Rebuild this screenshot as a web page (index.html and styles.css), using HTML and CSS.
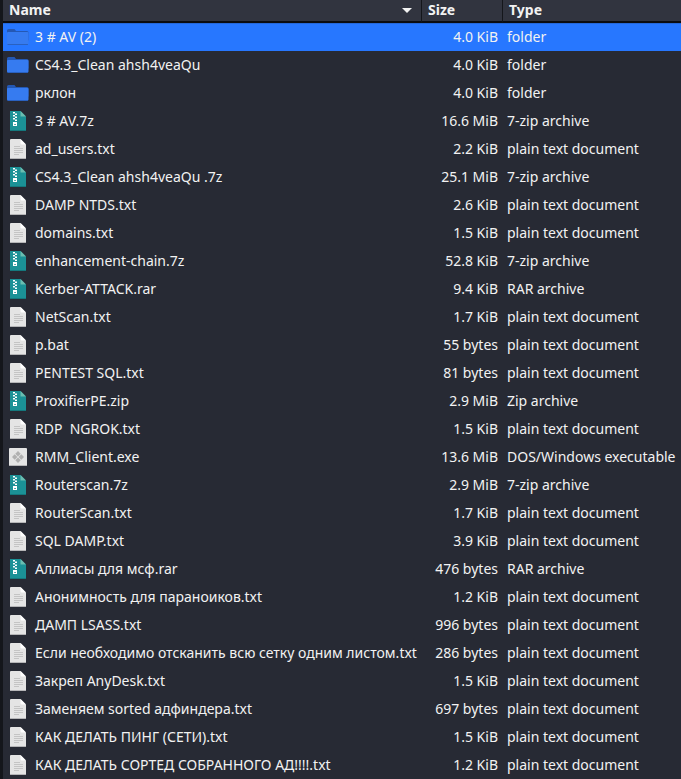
FILE: index.html
```html
<!DOCTYPE html>
<html lang="en">
<head>
    <meta charset="UTF-8">
    <meta name="viewport" content="width=device-width, initial-scale=1.0">
    <title>File Manager</title>
    <link rel="stylesheet" href="styles.css">
</head>
<body>
    <svg class="sprite" aria-hidden="true">
        <symbol id="folder" viewBox="0 0 24 24">
            <path fill="#2458b4" d="M1 5.500q0-1.500 1.500-1.500h6l1.500 2h11q1.500 0 1.500 1.500v8H1z"/>
            <rect x="1" y="7" width="21.500" height="12.500" rx="1" fill="#367bf0"/>
            <path fill="#2a61c0" d="M1.500 19h20.500v.5q0 .5-1 .5H2.500q-1 0-1-.5z"/>
        </symbol>
        <symbol id="archive" viewBox="0 0 24 24">
            <path fill="#1b9196" d="M4 2h10.500L20 7.500V22H4z"/>
            <path fill="#6bbdb0" d="M14.500 2v5.500H20z"/>
            <path fill="#14787d" d="M4 21h16v1H4z"/>
            <path fill="#fff" d="M7 3h2v1.500H7zM9 4.500h2V6H9zM7 6h2v1.500H7zM9 7.500h2V9H9zM7 9h2v1.500H7zM9 10.500h2V12H9zM7 13h4v4H7z"/>
            <path fill="#1b9196" d="M8.300 15h1.500v1H8.300z"/>
        </symbol>
        <symbol id="text" viewBox="0 0 24 24">
            <path fill="#e4e4e4" d="M5 2h9.500L20 7.500V21q0 1-1 1H5q-1 0-1-1V3q0-1 1-1z"/>
            <path fill="#fff" d="M14.500 2v4.500q0 1 1 1H20z"/>
            <path fill="#c4c4c4" d="M8 9h6v1H8zM8 11h9v1H8zM8 13h9v1H8zM8 15h9v1H8zM8 17h5v1H8z"/>
            <path fill="#b5b5b7" d="M4 21h16q0 1-1 1H5q-1 0-1-1z"/>
        </symbol>
        <symbol id="exe" viewBox="0 0 24 24">
            <rect x="3" y="3" width="18" height="18" rx="1" fill="#e4e4e4"/>
            <path fill="#b5b5b7" d="M3 20h18q0 1-1 1H4q-1 0-1-1z"/>
            <path fill="#b0b0b0" d="M12 6l2.700 2.700L12 11.400 9.300 8.700zM8.700 9.300l2.700 2.700-2.700 2.700L6 12zM15.300 9.300L18 12l-2.700 2.700-2.700-2.700zM12 12.600l2.700 2.700L12 18l-2.700-2.700z"/>
        </symbol>
    </svg>

    <main class="file-list">
        <table class="files">
            <thead>
                <tr>
                    <th class="col-name" aria-sort="ascending"><button class="sort">Name <span class="arrow"></span></button></th>
                    <th class="col-size"><button class="sort">Size</button></th>
                    <th class="col-type"><button class="sort">Type</button></th>
                </tr>
            </thead>
            <tbody>
                <tr class="selected"><td class="name"><svg class="icon"><use href="#folder"/></svg>3 # AV (2)</td><td class="size">4.0 KiB</td><td>folder</td></tr>
                <tr><td class="name"><svg class="icon"><use href="#folder"/></svg>CS4.3_Clean ahsh4veaQu</td><td class="size">4.0 KiB</td><td>folder</td></tr>
                <tr><td class="name"><svg class="icon"><use href="#folder"/></svg>рклон</td><td class="size">4.0 KiB</td><td>folder</td></tr>
                <tr><td class="name"><svg class="icon"><use href="#archive"/></svg>3 # AV.7z</td><td class="size">16.6 MiB</td><td>7-zip archive</td></tr>
                <tr><td class="name"><svg class="icon"><use href="#text"/></svg>ad_users.txt</td><td class="size">2.2 KiB</td><td>plain text document</td></tr>
                <tr><td class="name"><svg class="icon"><use href="#archive"/></svg>CS4.3_Clean ahsh4veaQu .7z</td><td class="size">25.1 MiB</td><td>7-zip archive</td></tr>
                <tr><td class="name"><svg class="icon"><use href="#text"/></svg>DAMP NTDS.txt</td><td class="size">2.6 KiB</td><td>plain text document</td></tr>
                <tr><td class="name"><svg class="icon"><use href="#text"/></svg>domains.txt</td><td class="size">1.5 KiB</td><td>plain text document</td></tr>
                <tr><td class="name"><svg class="icon"><use href="#archive"/></svg>enhancement-chain.7z</td><td class="size">52.8 KiB</td><td>7-zip archive</td></tr>
                <tr><td class="name"><svg class="icon"><use href="#archive"/></svg>Kerber-ATTACK.rar</td><td class="size">9.4 KiB</td><td>RAR archive</td></tr>
                <tr><td class="name"><svg class="icon"><use href="#text"/></svg>NetScan.txt</td><td class="size">1.7 KiB</td><td>plain text document</td></tr>
                <tr><td class="name"><svg class="icon"><use href="#text"/></svg>p.bat</td><td class="size">55 bytes</td><td>plain text document</td></tr>
                <tr><td class="name"><svg class="icon"><use href="#text"/></svg>PENTEST SQL.txt</td><td class="size">81 bytes</td><td>plain text document</td></tr>
                <tr><td class="name"><svg class="icon"><use href="#archive"/></svg>ProxifierPE.zip</td><td class="size">2.9 MiB</td><td>Zip archive</td></tr>
                <tr><td class="name"><svg class="icon"><use href="#text"/></svg>RDP  NGROK.txt</td><td class="size">1.5 KiB</td><td>plain text document</td></tr>
                <tr><td class="name"><svg class="icon"><use href="#exe"/></svg>RMM_Client.exe</td><td class="size">13.6 MiB</td><td>DOS/Windows executable</td></tr>
                <tr><td class="name"><svg class="icon"><use href="#archive"/></svg>Routerscan.7z</td><td class="size">2.9 MiB</td><td>7-zip archive</td></tr>
                <tr><td class="name"><svg class="icon"><use href="#text"/></svg>RouterScan.txt</td><td class="size">1.7 KiB</td><td>plain text document</td></tr>
                <tr><td class="name"><svg class="icon"><use href="#text"/></svg>SQL DAMP.txt</td><td class="size">3.9 KiB</td><td>plain text document</td></tr>
                <tr><td class="name"><svg class="icon"><use href="#archive"/></svg>Аллиасы для мсф.rar</td><td class="size">476 bytes</td><td>RAR archive</td></tr>
                <tr><td class="name"><svg class="icon"><use href="#text"/></svg>Анонимность для параноиков.txt</td><td class="size">1.2 KiB</td><td>plain text document</td></tr>
                <tr><td class="name"><svg class="icon"><use href="#text"/></svg>ДАМП LSASS.txt</td><td class="size">996 bytes</td><td>plain text document</td></tr>
                <tr><td class="name"><svg class="icon"><use href="#text"/></svg>Если необходимо отсканить всю сетку одним листом.txt</td><td class="size">286 bytes</td><td>plain text document</td></tr>
                <tr><td class="name"><svg class="icon"><use href="#text"/></svg>Закреп AnyDesk.txt</td><td class="size">1.5 KiB</td><td>plain text document</td></tr>
                <tr><td class="name"><svg class="icon"><use href="#text"/></svg>Заменяем sorted адфиндера.txt</td><td class="size">697 bytes</td><td>plain text document</td></tr>
                <tr><td class="name"><svg class="icon"><use href="#text"/></svg>КАК ДЕЛАТЬ ПИНГ (СЕТИ).txt</td><td class="size">1.5 KiB</td><td>plain text document</td></tr>
                <tr><td class="name"><svg class="icon"><use href="#text"/></svg>КАК ДЕЛАТЬ СОРТЕД СОБРАННОГО АД!!!!.txt</td><td class="size">1.2 KiB</td><td>plain text document</td></tr>
            </tbody>
        </table>
    </main>
</body>
</html>
```
FILE: styles.css
```css
body {
    margin: 0;
    background: #272a34;
    color: #f2f2f2;
    font-family: "Noto Sans", sans-serif;
    font-size: 14px;
    line-height: 20px;
}

.sprite {
    display: none;
}

.file-list {
    border-left: 3px solid #14161b;
}

.files {
    width: 100%;
    table-layout: fixed;
    border-collapse: separate;
    border-spacing: 0;
}

th {
    height: 23px;
    padding: 0 0 1px;
    box-sizing: border-box;
    background: #31343f;
    border-bottom: 2px solid #0b0c10;
}

th + th {
    border-left: 1px solid #14161b;
}

.col-size {
    width: 81px;
}

.col-type {
    width: 179px;
}

.sort {
    display: flex;
    align-items: center;
    justify-content: space-between;
    width: 100%;
    padding: 0 9px 0 6px;
    border: none;
    background: none;
    color: inherit;
    font: inherit;
    font-weight: bold;
}

.arrow {
    border: 5px solid transparent;
    border-top-color: #f2f2f2;
    border-bottom: none;
}

td {
    height: 28px;
    padding: 0 0 0 5px;
    white-space: pre;
}

.name {
    display: flex;
    align-items: center;
    gap: 5px;
    padding-left: 3px;
}

.size {
    padding: 0 4px 0 0;
    text-align: right;
}

.icon {
    flex: none;
    width: 24px;
    height: 24px;
}

.selected td {
    background: #2777ff;
    box-shadow: inset 0 1px #2468da;
}
```
